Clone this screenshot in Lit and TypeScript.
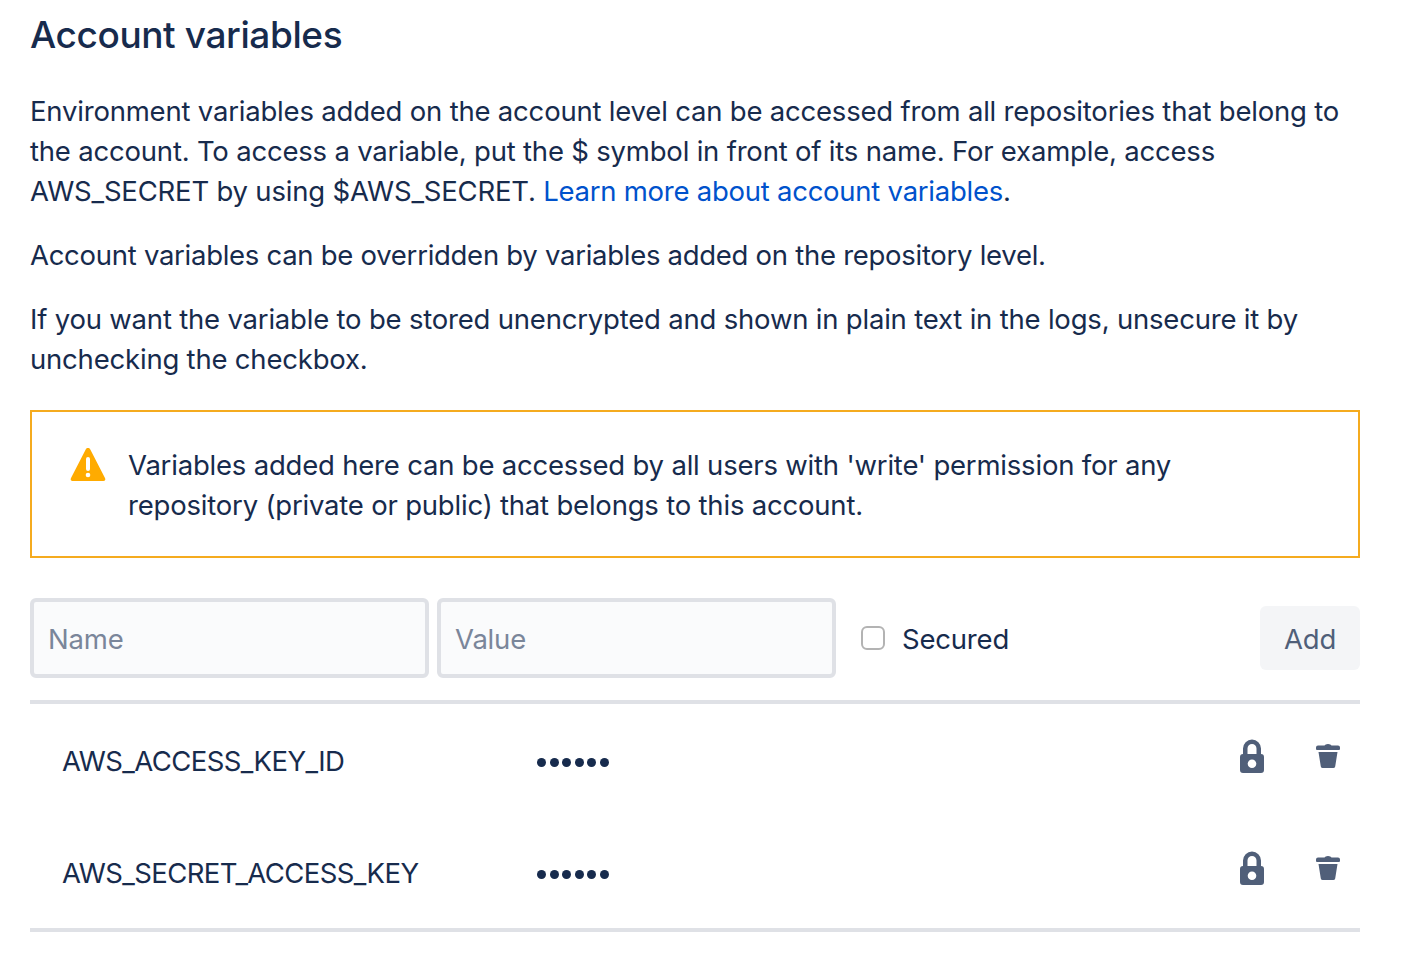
import { LitElement, html, css } from "lit";
import { customElement } from "lit/decorators.js";

const lock = html`<svg class="ic" width="48" height="48" viewBox="0 0 48 48"><path fill="#505f79" fill-rule="evenodd" d="M15 20v-5.500a9 9 0 0 1 18 0V20a3 3 0 0 1 3 3v13a3 3 0 0 1-3 3H15a3 3 0 0 1-3-3V23a3 3 0 0 1 3-3zm4.500 0h9v-5.500a4.500 4.500 0 0 0-9 0V20zM24 34a4.300 4.300 0 1 0 0-8.600 4.300 4.300 0 0 0 0 8.600z"/></svg>`;
const trash = html`<svg class="ic" width="48" height="48" viewBox="0 0 48 48"><path fill="#505f79" d="M20.500 11.500a3.500 2 0 0 1 3.500-1.500 3.500 2 0 0 1 3.500 1.500H34a2 2 0 0 1 2 2V15a1 1 0 0 1-1 1H13a1 1 0 0 1-1-1v-1.500a2 2 0 0 1 2-2h6.500zM14.500 18h19L31.200 32.500a2 2 0 0 1-2 1.500H18.800a2 2 0 0 1-2-1.500L14.500 18z"/></svg>`;
const warn = html`<svg class="warn" width="36" height="36" viewBox="0 0 36 36"><path fill="#ffab00" d="M15.700 2.400c1-1.900 3.600-1.900 4.600 0l14.800 28.800c.7 1.300-.2 2.800-1.700 2.800H2.600C1.100 34 .2 32.500.900 31.200L15.700 2.400z"/><rect x="16" y="10" width="4" height="14" rx="2" fill="#fff"/><circle cx="18" cy="28" r="2.300" fill="#fff"/></svg>`;

@customElement("app-root")
export class AppRoot extends LitElement {
  static styles = css`
    :host {
      display: block;
      box-sizing: border-box;
      width: 1404px;
      height: 966px;
      padding: 0 44px 0 30px;
      background: #fff;
      color: #172b4d;
      font-family: Inter, "Liberation Sans", sans-serif;
      font-size: 27.5px;
      letter-spacing: -0.2px;
      line-height: 40px;
      overflow: hidden;
    }
    h1 {
      margin: 0;
      padding-top: 11px;
      font-size: 37px;
      line-height: 48px;
      font-weight: 500;
      letter-spacing: -0.4px;
    }
    p { margin: 0; }
    .intro { margin-top: 32px; }
    .next { margin-top: 24px; }
    .tight { letter-spacing: -0.28px; }
    a { color: #0052cc; text-decoration: none; letter-spacing: -0.25px; }
    .notice {
      box-sizing: border-box;
      margin-top: 31px;
      height: 148px;
      border: 2px solid #f5ab1f;
      padding: 33px 160px 0 38px;
      display: flex;
      gap: 22px;
    }
    .warn { flex: none; margin-top: 2px; }
    .form {
      margin-top: 40px;
      height: 80px;
      display: flex;
      align-items: center;
      gap: 8px;
    }
    input.field {
      box-sizing: border-box;
      width: 399px;
      height: 80px;
      border: 4px solid #dfe1e6;
      border-radius: 6px;
      background: #fafbfc;
      padding: 2px 14px 0;
      font: inherit;
      letter-spacing: inherit;
      color: #172b4d;
      outline: none;
    }
    input.field::placeholder { color: #7a869a; opacity: 1; }
    .secured {
      display: flex;
      align-items: center;
      gap: 17px;
      margin-left: 17px;
    }
    .sec-label { padding-top: 1px; }
    .box {
      box-sizing: border-box;
      width: 24px;
      height: 24px;
      border: 2px solid #b3b3b3;
      border-radius: 6px;
      background: #fff;
    }
    button {
      margin-left: auto;
      width: 100px;
      height: 64px;
      border: 0;
      border-radius: 6px;
      background: #f4f5f7;
      color: #505f79;
      font: inherit;
      letter-spacing: inherit;
      padding: 2px 0 0;
    }
    .rows {
      margin-top: 22px;
      border-top: 4px solid #dfe1e6;
      border-bottom: 4px solid #dfe1e6;
    }
    .row {
      height: 112px;
      display: grid;
      grid-template-columns: 475px 1fr 88px 64px;
      align-items: center;
      padding-left: 32px;
    }
    .name { letter-spacing: -0.6px; padding-top: 2px; }
    .dots {
      display: flex;
      gap: 3.6px;
      padding-top: 2px;
    }
    .dot { width: 9px; height: 9px; border-radius: 50%; background: #172b4d; margin-top: 2px; }
    .ic { display: block; justify-self: center; margin-top: -4px; }
  `;

  private row(name: string) {
    return html`<div class="row">
      <span class="name">${name}</span>
      <span class="dots">${[0, 1, 2, 3, 4, 5].map(() => html`<i class="dot"></i>`)}</span>
      ${lock}${trash}
    </div>`;
  }

  render() {
    return html`
      <h1>Account variables</h1>
      <p class="intro">Environment variables added on the account level can be accessed from all repositories that belong to the account. To access a variable, put the $ symbol in front of its name. For example, access AWS_SECRET by using $AWS_SECRET. <a href="#">Learn more about account variables</a>.</p>
      <p class="next tight">Account variables can be overridden by variables added on the repository level.</p>
      <p class="next">If you want the variable to be stored unencrypted and shown in plain text in the logs, unsecure it by unchecking the checkbox.</p>
      <div class="notice">${warn}<div>Variables added here can be accessed by all users with 'write' permission for any repository (private or public) that belongs to this account.</div></div>
      <div class="form">
        <input class="field" placeholder="Name" />
        <input class="field" placeholder="Value" />
        <label class="secured"><span class="box"></span><span class="sec-label">Secured</span></label>
        <button>Add</button>
      </div>
      <div class="rows">
        ${this.row("AWS_ACCESS_KEY_ID")}
        ${this.row("AWS_SECRET_ACCESS_KEY")}
      </div>
    `;
  }
}
